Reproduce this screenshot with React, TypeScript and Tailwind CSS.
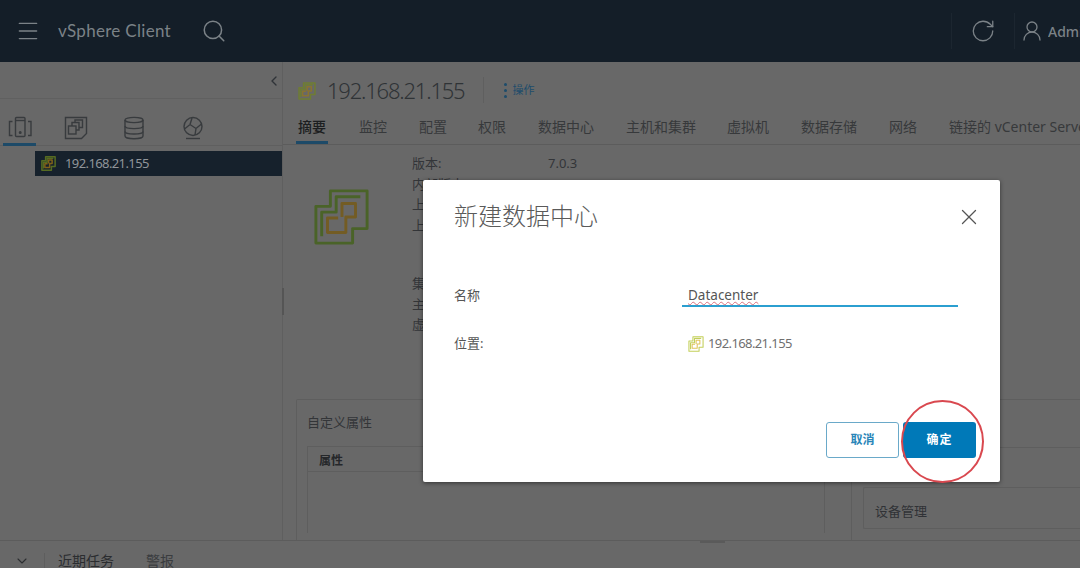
import { ChevronDown, ChevronLeft, Menu, RotateCw, Search, UserRound, X } from "lucide-react"

const cjk = "font-['Noto_Sans','Noto_Sans_CJK_SC',sans-serif]"

const tabs = [
  { title: "摘要", width: "w-[61px]", active: true },
  { title: "监控", width: "w-[60px]" },
  { title: "配置", width: "w-[59px]" },
  { title: "权限", width: "w-[60px]" },
  { title: "数据中心", width: "w-[88px]" },
  { title: "主机和集群", width: "w-[101px]" },
  { title: "虚拟机", width: "w-[74px]" },
  { title: "数据存储", width: "w-[88px]" },
  { title: "网络", width: "w-[60px]" },
  { title: "链接的 vCenter Server 系统", width: "w-[200px]" },
]

// vCenter mark, two interlocked squares
function VcIcon({ className, green, orange, width = 3 }: { className?: string; green: string; orange: string; width?: number }) {
  return (
    <svg viewBox="8 6 59 60" className={className} fill="none" strokeWidth={width} strokeLinejoin="round">
      <path d="M26 9H64V48H49V63H11V25H26Z" stroke={green} />
      <path d="M57 15H32V31H17V56" stroke={green} />
      <path d="M38 36V22H52V36H42V52H23V37H34" stroke={orange} />
    </svg>
  )
}

function HostsIcon() {
  return (
    <svg width="24" height="24" viewBox="0 0 24 24" fill="none" stroke="#383b3e" strokeWidth="1.4">
      <rect x="7.5" y="2.5" width="9.5" height="19" rx="1" />
      <path d="M7.5 5.5H17" />
      <circle cx="12.2" cy="17.5" r="0.8" fill="#383b3e" />
      <path d="M4.5 6.5H1.5V20.5H4.5M20 6.5H23V20.5H20" />
    </svg>
  )
}

function VmsIcon() {
  return (
    <svg width="24" height="24" viewBox="0 0 24 24" fill="none" stroke="#383b3e" strokeWidth="1.4">
      <path d="M1.5 1.5H22.5V17.5L17.5 22.5H1.5Z" />
      <rect x="4.5" y="10" width="7.5" height="8" />
      <path d="M8 10V6.5H15V14H12" />
      <path d="M11 6.5V4H18.5V11.5H15" />
    </svg>
  )
}

function StorageIcon() {
  return (
    <svg width="24" height="24" viewBox="0 0 24 24" fill="none" stroke="#383b3e" strokeWidth="1.4">
      <ellipse cx="12" cy="4" rx="9" ry="2.6" />
      <path d="M3 4V20C3 21.6 7 22.8 12 22.8S21 21.6 21 20V4" />
      <path d="M3 10C3 11.6 7 12.6 12 12.6S21 11.6 21 10M3 15.5C3 17.1 7 18 12 18S21 17.1 21 15.5" />
    </svg>
  )
}

function NetworkIcon() {
  return (
    <svg width="24" height="24" viewBox="0 0 24 24" fill="none" stroke="#383b3e" strokeWidth="1.4">
      <circle cx="12" cy="10.5" r="9" />
      <path d="M3.5 13L9 8.5L15 12.5L20.5 8M9 8.5L11 2M15 12.5L14 19" />
      <path d="M5 22.5H19" />
    </svg>
  )
}

function Row({ children }: { children: React.ReactNode }) {
  return <div className="h-[20.5px] leading-[20.5px]">{children}</div>
}

export default function App() {
  return (
    <div className={`relative flex h-[568px] w-[1080px] flex-col overflow-hidden bg-[#686868] ${cjk}`}>
      {/* Header */}
      <header className="flex h-[62px] shrink-0 items-center bg-[#141e28] text-[#7b8287]">
        <Menu className="ml-[15px] h-[26px] w-[26px]" strokeWidth={1.2} />
        <span className="ml-[17px] font-['Lato',sans-serif] text-[17px] tracking-[0.3px]">vSphere Client</span>
        <Search className="ml-[30px] h-[26px] w-[26px]" strokeWidth={1.4} />
        <div className="ml-auto flex h-full items-center">
          <div className="h-[36px] w-px bg-[#1c2630]" />
          <RotateCw className="ml-[18px] h-[26px] w-[26px]" strokeWidth={1.2} />
          <div className="ml-[18px] h-[36px] w-px bg-[#1c2630]" />
          <UserRound className="ml-[5px] h-[24px] w-[24px]" strokeWidth={1.3} />
          <span className="ml-[4px] w-[32px] overflow-hidden text-[14px] font-medium whitespace-nowrap">Administrator</span>
        </div>
      </header>

      {/* Main */}
      <div className="flex min-h-0 flex-1">
        <aside className="w-[283px] shrink-0 border-r border-[#5f5f5f]">
          <div className="flex h-[37px] items-center justify-end border-b border-[#606060] pt-[1px]">
            <ChevronLeft className="h-[16px] w-[16px] text-[#2f3338]" strokeWidth={2} />
          </div>
          <div className="flex h-[47px] border-b border-[#5f5f5f] pl-[3px]">
            <div className="flex h-[47px] w-[33px] items-center justify-center border-b-[3px] border-[#1d4a68] pt-[11px]"><HostsIcon /></div>
            <div className="ml-[28px] flex items-center pt-[12px]"><VmsIcon /></div>
            <div className="ml-[34px] flex items-center pt-[12px]"><StorageIcon /></div>
            <div className="ml-[35px] flex items-center pt-[12px]"><NetworkIcon /></div>
          </div>
          <div className="ml-[35px] mt-[5px] flex h-[25px] w-[247px] items-center bg-[#16212c] text-[13px] text-[#90959a]">
            <VcIcon className="ml-[6px] h-[15px] w-[15px]" green="#566b22" orange="#7f6019" width={6} />
            <span className="ml-[9px] tracking-[-0.6px]">192.168.21.155</span>
          </div>
        </aside>

        <main className="min-w-0 flex-1">
          <div className="flex h-[46px] items-center pt-[10px] pl-[15px]">
            <VcIcon className="mt-[2px] h-[18px] w-[18px]" green="#6f7d32" orange="#8a7430" width={5} />
            <span className="ml-[11px] text-[22px] font-light tracking-[-1.2px] text-[#2f3336]">192.168.21.155</span>
            <div className="ml-[18px] h-[26px] w-px bg-[#5f5f5f]" />
            <div className="ml-[20px] flex items-center gap-[6px] text-[11px] text-[#1d4c6b]">
              <span className="flex flex-col gap-[3px]">
                <span className="h-[3px] w-[3px] rounded-full bg-[#1d4c6b]" />
                <span className="h-[3px] w-[3px] rounded-full bg-[#1d4c6b]" />
                <span className="h-[3px] w-[3px] rounded-full bg-[#1d4c6b]" />
              </span>
              操作
            </div>
          </div>
          <nav className="flex h-[37px] border-b border-[#5c5c5c] pl-[13px] text-[14px] whitespace-nowrap text-[#37393b]">
            {tabs.map((tab) => (
              <div key={tab.title} className={`shrink-0 ${tab.width}`}>
                <div className={`inline-block h-[36px] px-[2px] pt-[8px] ${tab.active ? "border-b-[3px] border-[#1d4a68] font-medium text-[#1c1e20]" : ""}`}>
                  {tab.title}
                </div>
              </div>
            ))}
          </nav>

          <div className="flex h-[254px] pl-[30px]">
            <VcIcon className="mt-[43px] h-[58px] w-[57px] shrink-0" green="#4a6328" orange="#735c24" />
            <div className="ml-[42px] flex pt-[8px] text-[13px] text-[#333538]">
              <div className="w-[136px]">
                <Row>版本:</Row>
                <Row>内部版本:</Row>
                <Row>上次更新:</Row>
                <Row>上次备份:</Row>
                <div className="h-[38px]" />
                <Row>集群:</Row>
                <Row>主机:</Row>
                <Row>虚拟机:</Row>
              </div>
              <Row>7.0.3</Row>
            </div>
          </div>

          <div className="flex pl-[13px]">
            <section className="h-[141px] w-[556px] shrink-0 rounded-t-[2px] border border-b-0 border-[#5e5e5e] pt-[13px] pl-[10px]">
              <p className="text-[13px] text-[#333538]">自定义属性</p>
              <div className="mt-[13px] h-[87px] w-[518px] border border-b-0 border-[#5e5e5e]">
                <div className="h-[25px] border-b border-[#5e5e5e] pt-[2px] pl-[11px] text-[12px] leading-[24px] font-bold text-[#25272a]">属性</div>
              </div>
            </section>
            <div className="ml-[11px] flex-1">
              <section className="h-[49px] border-y border-l border-[#5e5e5e]" />
              <section className="mt-[39px] h-[42px] rounded-l-[2px] border-y border-l border-[#5e5e5e] pl-[11px] text-[13px] leading-[46px] text-[#303236]">
                设备管理
              </section>
            </div>
          </div>
        </main>
      </div>

      {/* Recent tasks bar */}
      <footer className="flex h-[28px] shrink-0 items-center border-t border-[#5c5c5c] pt-[12px] text-[14px] text-[#2b2d30]">
        <div className="flex h-full w-[45px] items-center justify-center border-r border-[#5e5e5e]">
          <ChevronDown className="h-[16px] w-[16px]" strokeWidth={1.6} />
        </div>
        <span className="ml-[13px]">近期任务</span>
        <span className="ml-[32px] text-[#3a3c3f]">警报</span>
      </footer>

      {/* Splitter handles */}
      <div className="absolute top-[288px] left-[282px] h-[27px] w-[2px] bg-[#555]" />
      <div className="absolute top-[541px] left-[700px] h-[2px] w-[25px] bg-[#5a5a5a]" />

      {/* Dialog */}
      <div className="absolute top-[180px] left-[423px] flex h-[302px] w-[577px] flex-col rounded-[2px] bg-white pr-[24px] pl-[31px] shadow-[0_1px_4px_rgba(0,0,0,0.5)]">
        <div className="flex h-[72px] items-center justify-between">
          <h2 className="text-[24px] leading-[32px] font-light text-[#5a5a5a]">新建数据中心</h2>
          <X className="mt-[2px] mr-[-6px] h-[26px] w-[26px] text-[#555]" strokeWidth={1.2} />
        </div>
        <div className="mt-[27px] flex h-[28px] items-center text-[13px] text-[#555]">
          <span className="w-[228px] pt-[6px]">名称</span>
          <div className="flex h-[28px] w-[276px] items-end border-b-2 border-[#2b9fd0] pl-[6px]">
            <span className="text-[13.5px] leading-[20px] text-[#555] underline decoration-[#d9707e] decoration-wavy decoration-1 underline-offset-1">Datacenter</span>
          </div>
        </div>
        <div className="mt-[24px] flex h-[26px] items-center text-[13px] text-[#555]">
          <span className="w-[234px]">位置:</span>
          <VcIcon className="h-[16px] w-[16px]" green="#c3cf5a" orange="#e0c45a" width={4} />
          <span className="ml-[4px] tracking-[-0.6px] text-[#6f6f6f]">192.168.21.155</span>
        </div>
        <div className="mt-auto mb-[24px] flex justify-end gap-[4px] text-[12px] font-bold">
          <button className="h-[36px] w-[73px] rounded-[3px] border border-[#6aa9c9] text-[#2a86b8]">取消</button>
          <button className="h-[36px] w-[73px] rounded-[3px] bg-[#0079b8] tracking-[1px] text-white">确定</button>
        </div>
      </div>

      {/* Red annotation circle */}
      <div className="absolute top-[400px] left-[901px] h-[83px] w-[83px] rounded-full border-2 border-[#d9484f]" />
    </div>
  )
}
